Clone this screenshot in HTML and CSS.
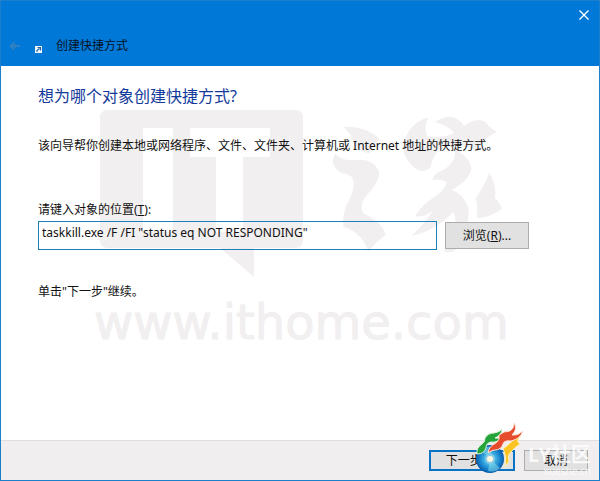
FILE: index.html
```html
<!DOCTYPE html>
<html lang="zh-CN">

<head>
  <meta charset="UTF-8">
  <meta name="viewport" content="width=device-width, initial-scale=1.0">
  <title>创建快捷方式</title>
  <link rel="stylesheet" href="styles.css">
</head>

<body>
  <form class="wizard">
    <header class="titlebar">
      <button class="close-btn" type="button" aria-label="关闭">
        <svg width="12" height="12" viewBox="0 0 12 12"><path d="M1.500 1.500l9 9M10.500 1.500l-9 9" fill="none" stroke="#fff" stroke-width="1.400"/></svg>
      </button>
      <div class="title-row">
        <button class="back-btn" type="button" aria-label="返回" disabled>
          <svg width="12" height="10" viewBox="0 0 12 10"><path d="M11 5H2M5.500 1L1.500 5l4 4M6 3v4" fill="none" stroke="#3c83bd" stroke-width="1.300"/></svg>
        </button>
        <svg class="shortcut-icon" width="7" height="7" viewBox="0 0 7 7">
          <path d="M0 0h7v7H0z" fill="#f2f7fb"/>
          <path d="M2 6V4.500L4.500 2.500M2.500 1.500h3v3" fill="none" stroke="#2465a8" stroke-width="1.200"/>
        </svg>
        <span class="title">创建快捷方式</span>
      </div>
    </header>

    <main class="content">
      <div class="watermark" aria-hidden="true">
        <svg width="410" height="170" viewBox="96 108 410 170" fill="#f1eff0">
          <path fill-rule="evenodd" d="M108 110H295Q303 110 303 118V240Q303 248 295 248H254V277L220 248H108Q100 248 100 240V118Q100 110 108 110ZM143 128V232H173V128ZM190 128V157H216V232H243V157H270V128Z"/>
          <g transform="translate(300 90) scale(.3333)">
            <path d="M128 110Q205 108 240 150Q220 160 208 190Q170 185 158 150Q150 125 128 110Z"/>
            <path d="M105 190Q125 215 165 210Q225 205 238 250Q235 280 205 310Q175 345 190 370Q250 400 257 435Q228 455 205 485Q190 430 130 410Q125 370 150 325Q168 285 158 265Q150 252 125 250Q98 235 98 210Z"/>
            <path d="M385 82Q370 110 382 140Q440 145 462 128Q450 110 405 95Q440 75 460 82Q480 90 492 108Q530 80 555 95Q570 115 590 125Q550 145 535 185Q490 160 430 166Q400 190 390 235Q360 255 335 225Q305 195 310 165Q325 100 385 82Z"/>
            <path d="M465 180Q505 195 515 235Q505 275 455 300Q490 310 505 355Q510 400 485 450Q475 490 435 487Q430 455 462 430Q472 390 460 365Q410 420 335 438Q375 400 400 360Q370 385 345 378Q370 340 405 320Q440 295 440 275Q420 265 397 270Q400 250 430 240Q470 215 465 180Z"/>
            <path d="M568 248Q590 285 585 325Q603 342 605 358Q565 385 530 384Q535 355 527 325Q555 285 568 248Z"/>
          </g>
        </svg>
        <div class="watermark-url">www.ithome.com</div>
      </div>

      <h1 class="heading">想为哪个对象创建快捷方式?</h1>
      <p class="intro">该向导帮你创建本地或网络程序、文件、文件夹、计算机或 Internet 地址的快捷方式。</p>
      <label class="field-label" for="location">请键入对象的位置(<u>T</u>):</label>
      <div class="field-row">
        <input class="location" id="location" type="text" value="taskkill.exe /F /FI &quot;status eq NOT RESPONDING&quot;">
        <button class="btn browse-btn" type="button">浏览(<u>R</u>)...</button>
      </div>
      <p class="hint">单击"下一步"继续。</p>
    </main>

    <footer class="actions">
      <button class="btn next-btn" type="submit">下一步(<u>N</u>)</button>
      <button class="btn cancel-btn" type="button">取消</button>
      <div class="brand" aria-hidden="true">
        <svg width="50" height="54" viewBox="0 0 50 54">
          <defs>
            <radialGradient id="disc">
              <stop offset="0" stop-color="#b5edf5"/>
              <stop offset=".4" stop-color="#41b2e2"/>
              <stop offset=".75" stop-color="#1680cc"/>
              <stop offset="1" stop-color="#0758a5"/>
            </radialGradient>
          </defs>
          <path d="M27 26Q31 23 34 20Q38 15 45 13Q39 18 44 21Q39 24 35 29Q31 32 33 38L29 44Q31 33 27 26Z" fill="#fbc422" stroke="#fff3b8"/>
          <circle cx="14" cy="36" r="14" fill="url(#disc)"/>
          <path d="M14 36L5 27Q10 22 17 24ZM14 36L24 45Q20 50 12 48Z" fill="#8de4ee" opacity=".5"/>
          <circle cx="14" cy="36" r="5" fill="#8bc9e8"/>
          <circle cx="14" cy="36" r="3" fill="#fff8df"/>
          <path d="M1 31Q0 25 6 21Q9 19 9 15Q12 10 18 10Q24 9 26 6Q26 12 19 15Q24 16 27 14Q22 20 15 19Q10 20 10 25Q8 31 1 31Z" fill="#26a43c" stroke="#d9f2d5"/>
          <path d="M12 30Q13 23 20 20Q24 17 23 12Q28 8 34 8Q38 6 38 0Q42 6 36 12Q42 13 47 8Q44 16 35 18Q28 17 27 21Q25 27 19 27Q16 27 12 30Z" fill="#e64b2b" stroke="#ffe2d5"/>
        </svg>
        <div class="brand-text">
          <span class="brand-name">LY社区</span>
          <span class="brand-url">xueshe.cn</span>
        </div>
      </div>
    </footer>
  </form>
</body>

</html>
```

FILE: styles.css
```css
* {
  margin: 0;
  padding: 0;
  box-sizing: border-box;
}

body {
  font-family: "Noto Sans", "Noto Sans CJK SC", sans-serif;
  font-size: 12px;
  line-height: 16px;
  color: #111;
}

button,
input {
  font: inherit;
  color: inherit;
}

.wizard {
  position: relative;
  display: flex;
  flex-direction: column;
  min-height: 100vh;
  border: 1px solid #1b7fcb;
  background: #fff;
}

.titlebar {
  display: flex;
  flex-direction: column;
  gap: 10px;
  padding: 8px 9px 12px 8px;
  background: #0078d7;
}

.close-btn,
.back-btn {
  display: flex;
  border: none;
  background: none;
}

.close-btn {
  align-self: flex-end;
  margin-bottom: 7px;
}

.title-row {
  display: flex;
  align-items: center;
}

.shortcut-icon {
  margin: 7px 14px 0 14px;
}

.title {
  color: #06121f;
}

.content {
  position: relative;
  z-index: 0;
  flex: 1;
  padding: 18px 70px 18px 37px;
}

.watermark {
  position: absolute;
  z-index: -1;
  top: 42px;
  left: 95px;
  color: #f1eff0;
}

.watermark svg {
  display: block;
}

.watermark-url {
  font-family: "DejaVu Sans", sans-serif;
  font-size: 48px;
  line-height: 60px;
  margin-top: 14px;
  margin-left: -2px;
  -webkit-text-stroke: 1px #f1eff0;
}

.heading {
  font-size: 16px;
  font-weight: normal;
  line-height: 24px;
  color: #133a9a;
}

.intro {
  margin-top: 30px;
  white-space: nowrap;
}

.field-label {
  display: block;
  margin-top: 48px;
}

.field-row {
  display: flex;
  align-items: center;
  gap: 8px;
  margin-top: 3px;
}

.location {
  flex: 1;
  min-width: 0;
  height: 29px;
  padding: 0 3px 6px;
  border: 1px solid #1b7fb8;
  background: transparent;
  outline: none;
}

.btn {
  border: 1px solid #adadad;
  background: #e1e1e1;
}

.browse-btn {
  width: 84px;
  height: 27px;
}

.hint {
  margin-top: 34px;
}

.actions {
  position: relative;
  display: flex;
  justify-content: flex-end;
  gap: 9px;
  padding: 9px 11px;
  border-top: 1px solid #dfdfdf;
  background: #f0eeee;
}

.actions .btn {
  height: 21px;
  line-height: 17px;
}

.next-btn {
  width: 86px;
  border: 2px solid #0a74c4;
}

.cancel-btn {
  width: 64px;
}

/* site stamp laid over the buttons */
.brand {
  position: absolute;
  right: 8px;
  bottom: 3px;
  display: flex;
  align-items: flex-end;
  pointer-events: none;
}

.brand-text {
  display: flex;
  flex-direction: column;
  margin-left: 2px;
  color: #fff;
  opacity: 0.8;
}

.brand-name {
  font-size: 20px;
  font-weight: bold;
  line-height: 20px;
}

.brand-url {
  align-self: flex-end;
  font-size: 10px;
  line-height: 12px;
}
```
